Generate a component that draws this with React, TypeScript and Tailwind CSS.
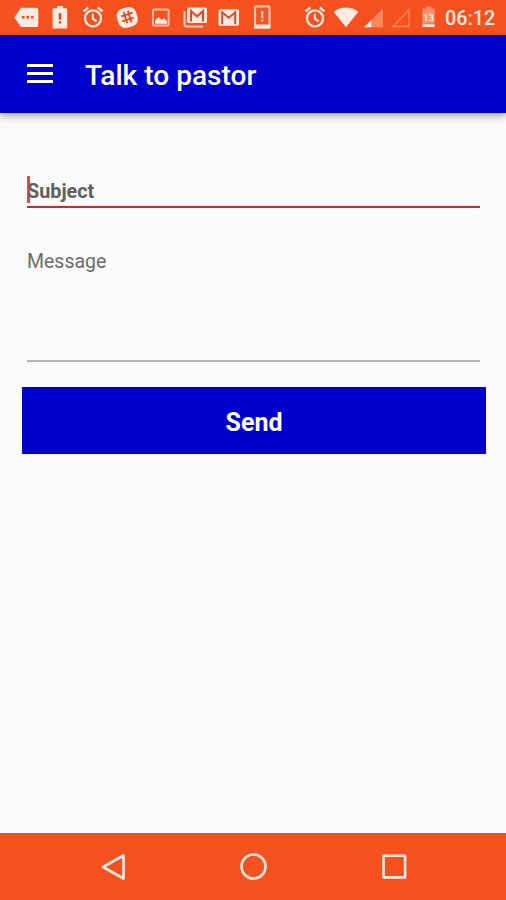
import type { ReactNode } from "react";

function Glyph({ box, className, children }: { box: string; className: string; children: ReactNode }) {
  return (
    <svg viewBox={box} className={`h-[35px] shrink-0 ${className}`} fill="none" stroke="none">
      {children}
    </svg>
  );
}

function Alarm({ className }: { className: string }) {
  return (
    <Glyph box="0 0 22 35" className={`w-[22px] ${className}`}>
      <circle cx="11" cy="18.3" r="8" stroke="#ffeae2" strokeWidth="2.3" />
      <path d="M1.5 11.3 6.3 7.5M20.5 11.3 15.7 7.5" stroke="#ffeae2" strokeWidth="2.3" />
      <path d="M10.8 13.5v5.2l3.8 2.6" stroke="#ffeae2" strokeWidth="2" />
    </Glyph>
  );
}

function StatusBar() {
  return (
    <header className="flex h-[35px] shrink-0 bg-[#f4511e]">
      <Glyph box="0 0 25 35" className="ml-[14px] w-[25px]">
        <path d="M8 7.7h14.5q1.8 0 1.8 1.8v15.8q0 1.8-1.8 1.8H8q-1.2 0-1.8-1L.3 17.4 6.2 8.7Q6.8 7.7 8 7.7z" fill="#ffeae2" />
        <path d="M8 16h2.5v2.5H8zM12.5 16H15v2.5h-2.5zM17 16h2.5v2.5H17z" fill="#ee4a20" />
      </Glyph>
      <Glyph box="0 0 16 35" className="ml-[13px] w-[16px]">
        <path d="M5 6h6v2.3h3q1.2 0 1.2 1.2v17.8q0 1.2-1.2 1.2H1.8Q.6 28.5.6 27.3V9.5q0-1.2 1.2-1.2H5z" fill="#ffeae2" />
        <path d="M6.7 13h2.4v6.7H6.7zM6.7 21.2h2.4v2.3H6.7z" fill="#e4461d" />
      </Glyph>
      <Alarm className="ml-[14px]" />
      <Glyph box="0 0 24 35" className="ml-[12px] w-[24px]">
        <rect x="1.2" y="7.5" width="20" height="20" rx="7.5" fill="#ffeae2" transform="rotate(-14 11.2 17.5)" />
        <path d="m7.6 11.8 3.6 11.5M11.9 10.8 15.3 22.2M5.2 16.3l11.3-3.6M6.3 21.3l11.3-3.6" stroke="#df4822" strokeWidth="1.8" />
      </Glyph>
      <Glyph box="0 0 18 35" className="ml-[12px] w-[18px]">
        <rect x="1" y="9.5" width="15.6" height="16" rx="1" stroke="#ffc0a8" strokeWidth="1.9" />
        <path d="M3 23.8v-3.5l3.5-3.2 3 2.7 2.4-1.5 3 2.5v3z" fill="#ffeae2" />
      </Glyph>
      <Glyph box="0 0 26 35" className="ml-[12px] w-[26px]">
        <path d="M2.5 11v13.5q0 2 2 2H21" stroke="#ffd0bf" strokeWidth="2" />
        <rect x="5" y="7.5" width="20" height="15.5" rx="1.6" fill="#ffeae2" />
        <path d="M9 21.5V11l6 5.3 6-5.3v10.5" stroke="#df4822" strokeWidth="2" />
      </Glyph>
      <Glyph box="0 0 22 35" className="ml-[10px] w-[22px]">
        <rect x=".5" y="9.2" width="20.5" height="16.5" rx="1.6" fill="#ffeae2" />
        <path d="M4.2 24.2V12.3l6.5 5.5 6.5-5.5v11.9" stroke="#df4822" strokeWidth="2" />
      </Glyph>
      <Glyph box="0 0 17 35" className="ml-[14px] w-[17px]">
        <rect x="1" y="6.400" width="14.5" height="21" rx="1.2" stroke="#ffc8b4" strokeWidth="2.2" />
        <path d="M0 24.5h16.5v4H0z" fill="#ffeae2" />
        <path d="M3.5 9.5H13v14H3.5z" fill="#ed572c" />
        <path d="M7.2 11h2v7h-2zM7.2 19.3h2v2.2h-2z" fill="#ffd8ca" />
      </Glyph>
      <Alarm className="ml-[33px]" />
      <Glyph box="0 0 26 35" className="ml-[7px] w-[26px]">
        <path d="M.6 11.8q5.5-4.3 12.4-4.3t12.4 4.3L13 27.3z" fill="#ffeae2" />
      </Glyph>
      <Glyph box="0 0 21 35" className="ml-[4px] w-[21px]">
        <path d="M1 27.3 20 8.2v19.1z" fill="#fb8760" />
        <path d="m1 27.3 7.3-7.3v7.3z" fill="#ffeae2" />
      </Glyph>
      <Glyph box="0 0 21 35" className="ml-[7px] w-[21px]">
        <path d="M2 26.4 18 9.9v16.5z" stroke="#fb8055" strokeWidth="1.6" />
      </Glyph>
      <Glyph box="0 0 16 35" className="ml-[9px] w-[16px]">
        <path d="M5 6.5h5.5v2h3.2v15.3H1.3V8.500H5z" fill="#fb8f6a" />
        <path d="M1.3 24.3h12.4v2.600H1.3z" fill="#ffeae2" />
        <text x="7.5" y="20.7" textAnchor="middle" fontSize="9.5" fontWeight="700" fill="#ffeae2">13</text>
      </Glyph>
      <span className="mt-[1px] ml-[8px] text-[19.8px] leading-[35px] font-medium text-[#ffeae2]">06:12</span>
    </header>
  );
}

export default function App() {
  return (
    <div className="flex h-[900px] w-[506px] flex-col overflow-hidden bg-[#fafafa] font-['Roboto',sans-serif]">
      <StatusBar />
      <div className="z-10 flex h-[78px] shrink-0 items-center bg-[#0000cd] pl-[27px] shadow-[0_3px_7px_rgba(0,0,0,0.35)]">
        <button aria-label="Menu" className="-mt-[2px] flex w-[26px] flex-col gap-[5px]">
          <span className="h-[3px] bg-white" />
          <span className="h-[3px] bg-white" />
          <span className="h-[3px] bg-white" />
        </button>
        <h1 className="ml-[32px] pt-[3px] text-[28.1px] leading-[32px] font-medium text-white">Talk to pastor</h1>
      </div>
      <main className="flex flex-1 flex-col pt-[63px] pr-[26px] pl-[27px]">
        <div className="flex h-[32px] border-b-2 border-[#cf2a30]">
          <span className="h-[27px] w-[3px] bg-[#dc4a50]" />
          <span className="-ml-[3px] text-[19.8px] leading-[31px] font-bold text-[#5f5f5f]">Subject</span>
        </div>
        <div className="mt-[38px] h-[116px] border-b-2 border-[#b4b4b4] text-[19.5px] leading-[32px] text-[#6c6c6c]">Message</div>
        <button className="mt-[25px] -mr-[6px] -ml-[5px] h-[67px] bg-[#0000cd] pt-[4px] text-[25px] font-bold text-white">Send</button>
      </main>
      <nav className="flex h-[67px] shrink-0 items-center border-t border-[#ee4615] bg-[#f4511e] pl-[100px]">
        <svg viewBox="0 0 28 28" className="size-[28px]" fill="none" stroke="#ffeae2" strokeWidth="2.6" strokeLinejoin="round">
          <path d="M23.500 2.500v23L3 14z" />
        </svg>
        <svg viewBox="0 0 28 28" className="ml-[112px] size-[28px]" fill="none" stroke="#ffeae2" strokeWidth="2.6">
          <circle cx="13.5" cy="13.5" r="12" />
        </svg>
        <svg viewBox="0 0 28 28" className="ml-[112px] size-[28px]" fill="none" stroke="#ffeae2" strokeWidth="2.6" strokeLinejoin="round">
          <path d="M3.5 2.800h21.600v21.600H3.500z" />
        </svg>
      </nav>
    </div>
  );
}
